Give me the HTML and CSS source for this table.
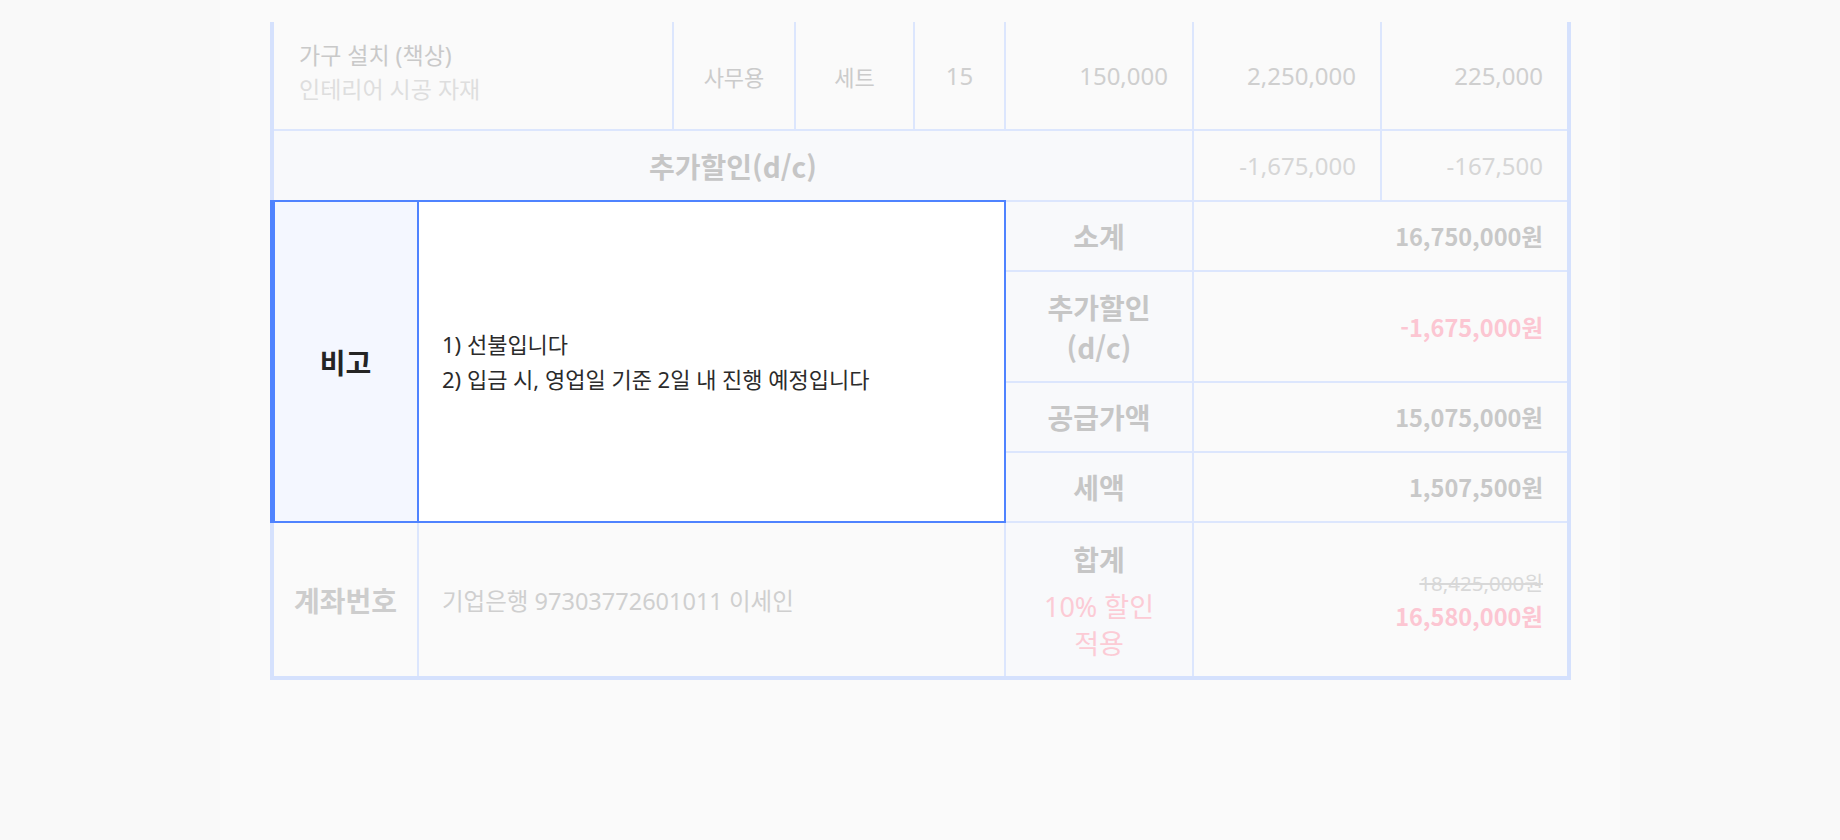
FILE: index.html
```html
<!DOCTYPE html>
<html lang="ko">
<head>
<meta charset="utf-8">
<title>견적서</title>
<link rel="stylesheet" href="styles.css">
</head>
<body>
<div class="page">
  <div class="panel">
    <div class="sheet">
      <div class="cell item c-ab r1">
        <div class="item-name">가구 설치 (책상)</div>
        <div class="item-sub">인테리어 시공 자재</div>
      </div>
      <div class="cell center r1">사무용</div>
      <div class="cell center r1">세트</div>
      <div class="cell center num-text r1">15</div>
      <div class="cell num r1">150,000</div>
      <div class="cell num r1">2,250,000</div>
      <div class="cell num r1">225,000</div>

      <div class="cell head-label c-dc r2">추가할인(d/c)</div>
      <div class="cell num minus r2">-1,675,000</div>
      <div class="cell num minus r2">-167,500</div>

      <div class="cell remark-head c1 r3-6">비고</div>
      <div class="cell remark-body c2-5 r3-6">
        <p>1) 선불입니다</p>
        <p>2) 입금 시, 영업일 기준 2일 내 진행 예정입니다</p>
      </div>

      <div class="cell sum-label c6 r3">소계</div>
      <div class="cell sum-value c7-8 r3">16,750,000원</div>

      <div class="cell sum-label c6 r4">추가할인<br>(d/c)</div>
      <div class="cell sum-value pink c7-8 r4">-1,675,000원</div>

      <div class="cell sum-label c6 r5">공급가액</div>
      <div class="cell sum-value c7-8 r5">15,075,000원</div>

      <div class="cell sum-label c6 r6">세액</div>
      <div class="cell sum-value c7-8 r6">1,507,500원</div>

      <div class="cell acc-label c1 r7">계좌번호</div>
      <div class="cell acc-value c2-5 r7">기업은행 97303772601011 이세인</div>
      <div class="cell total-label c6 r7">
        <div class="total-title">합계</div>
        <div class="total-note">10% 할인<br>적용</div>
      </div>
      <div class="cell total-value c7-8 r7">
        <div class="old-price">18,425,000원</div>
        <div class="new-price">16,580,000원</div>
      </div>

      <div class="focus-ring"></div>
    </div>
  </div>
</div>
</body>
</html>
```

FILE: styles.css
```css
* { box-sizing: border-box; }

html, body {
  margin: 0;
  padding: 0;
}

body {
  background: #f9f9f9;
  font-family: "Noto Sans", "Noto Sans CJK KR", sans-serif;
  color: #333;
}

.page {
  display: flex;
  justify-content: center;
  min-height: 840px;
}

.panel {
  width: 1400px;
  background: #fafafa;
  padding: 22px 49px 0 50px;
}

.sheet {
  display: grid;
  grid-template-columns: 143px 253px 120px 117px 89px 186px 186px 185px;
  grid-template-rows: 107px 69px 68px 109px 68px 68px 153px;
  gap: 2px;
  background: #dce6fd;
  border: 4px solid #d5e1fd;
  border-top: none;
  width: 1301px;
}

.cell {
  background: #fafafa;
  display: flex;
  align-items: center;
  font-size: 22px;
  color: #cbcbcb;
  min-width: 0;
}

.center { justify-content: center; }
.num-text { font-size: 24px; color: #cfcfcf; }
.num { justify-content: flex-end; padding-right: 24px; font-size: 24px; color: #cfcfcf; }
.num.minus { color: #d6d6d6; }

/* placement */
.c-ab { grid-column: 1 / 3; }
.c-dc { grid-column: 1 / 7; }
.c1 { grid-column: 1 / 2; }
.c2-5 { grid-column: 2 / 6; }
.c6 { grid-column: 6 / 7; }
.c7-8 { grid-column: 7 / 9; }
.r1 { grid-row: 1; }
.r2 { grid-row: 2; }
.r3 { grid-row: 3; }
.r4 { grid-row: 4; }
.r5 { grid-row: 5; }
.r6 { grid-row: 6; }
.r7 { grid-row: 7; }
.r3-6 { grid-row: 3 / 7; }

.item {
  flex-direction: column;
  align-items: flex-start;
  justify-content: center;
  padding: 0 0 7px 25px;
  font-size: 23px;
  line-height: 34px;
}
.item-name { color: #c9c9c9; }
.item-sub { color: #dedede; }

.head-label,
.remark-head,
.sum-label,
.acc-label,
.total-title,
.sum-value,
.new-price {
  font-family: "Noto Sans CJK KR", sans-serif;
  font-weight: 700;
}

.head-label {
  background: #f8f9fb;
  justify-content: center;
  font-size: 28px;
  color: #c6c6c6;
}

.remark-head {
  background: #f4f7ff;
  justify-content: center;
  font-size: 28px;
  color: #242424;
  box-shadow: 2px 0 0 #4f83ff;
}

.remark-body {
  background: #ffffff;
  flex-direction: column;
  align-items: flex-start;
  justify-content: center;
  padding-left: 23px;
  color: #2b2b2b;
  font-size: 22px;
  line-height: 35px;
}
.remark-body p { margin: 0; }

.sum-label {
  background: #f8f9fb;
  justify-content: center;
  text-align: center;
  font-size: 28px;
  line-height: 40px;
  color: #c6c6c6;
}

.sum-value {
  justify-content: flex-end;
  padding-right: 24px;
  font-size: 23.5px;
  color: #c8c8c8;
}
.sum-value.pink { color: #fcc6d2; }

.acc-label {
  justify-content: center;
  font-size: 28px;
  color: #cdcdcd;
}
.acc-value {
  padding-left: 23px;
  font-size: 23.5px;
  color: #cfcfcf;
}

.total-label {
  background: #f8f9fb;
  flex-direction: column;
  justify-content: flex-start;
  padding-top: 14px;
  text-align: center;
}
.total-title {
  font-size: 28px;
  line-height: 44px;
  color: #c6c6c6;
}
.total-note {
  margin-top: 7px;
  font-size: 27px;
  line-height: 37px;
  color: #fccbd5;
}

.total-value {
  flex-direction: column;
  align-items: flex-end;
  justify-content: center;
  padding-right: 24px;
}
.old-price {
  font-size: 20.5px;
  line-height: 32px;
  color: #d8d8d8;
  text-decoration: line-through;
}
.new-price {
  font-size: 23.5px;
  line-height: 34px;
  color: #fcc6d2;
}

.focus-ring {
  grid-column: 1 / 6;
  grid-row: 3 / 7;
  margin: -2px -2px -2px -4px;
  border: 2px solid #4f83ff;
  border-left-width: 5px;
  position: relative;
  z-index: 1;
  pointer-events: none;
}
```
